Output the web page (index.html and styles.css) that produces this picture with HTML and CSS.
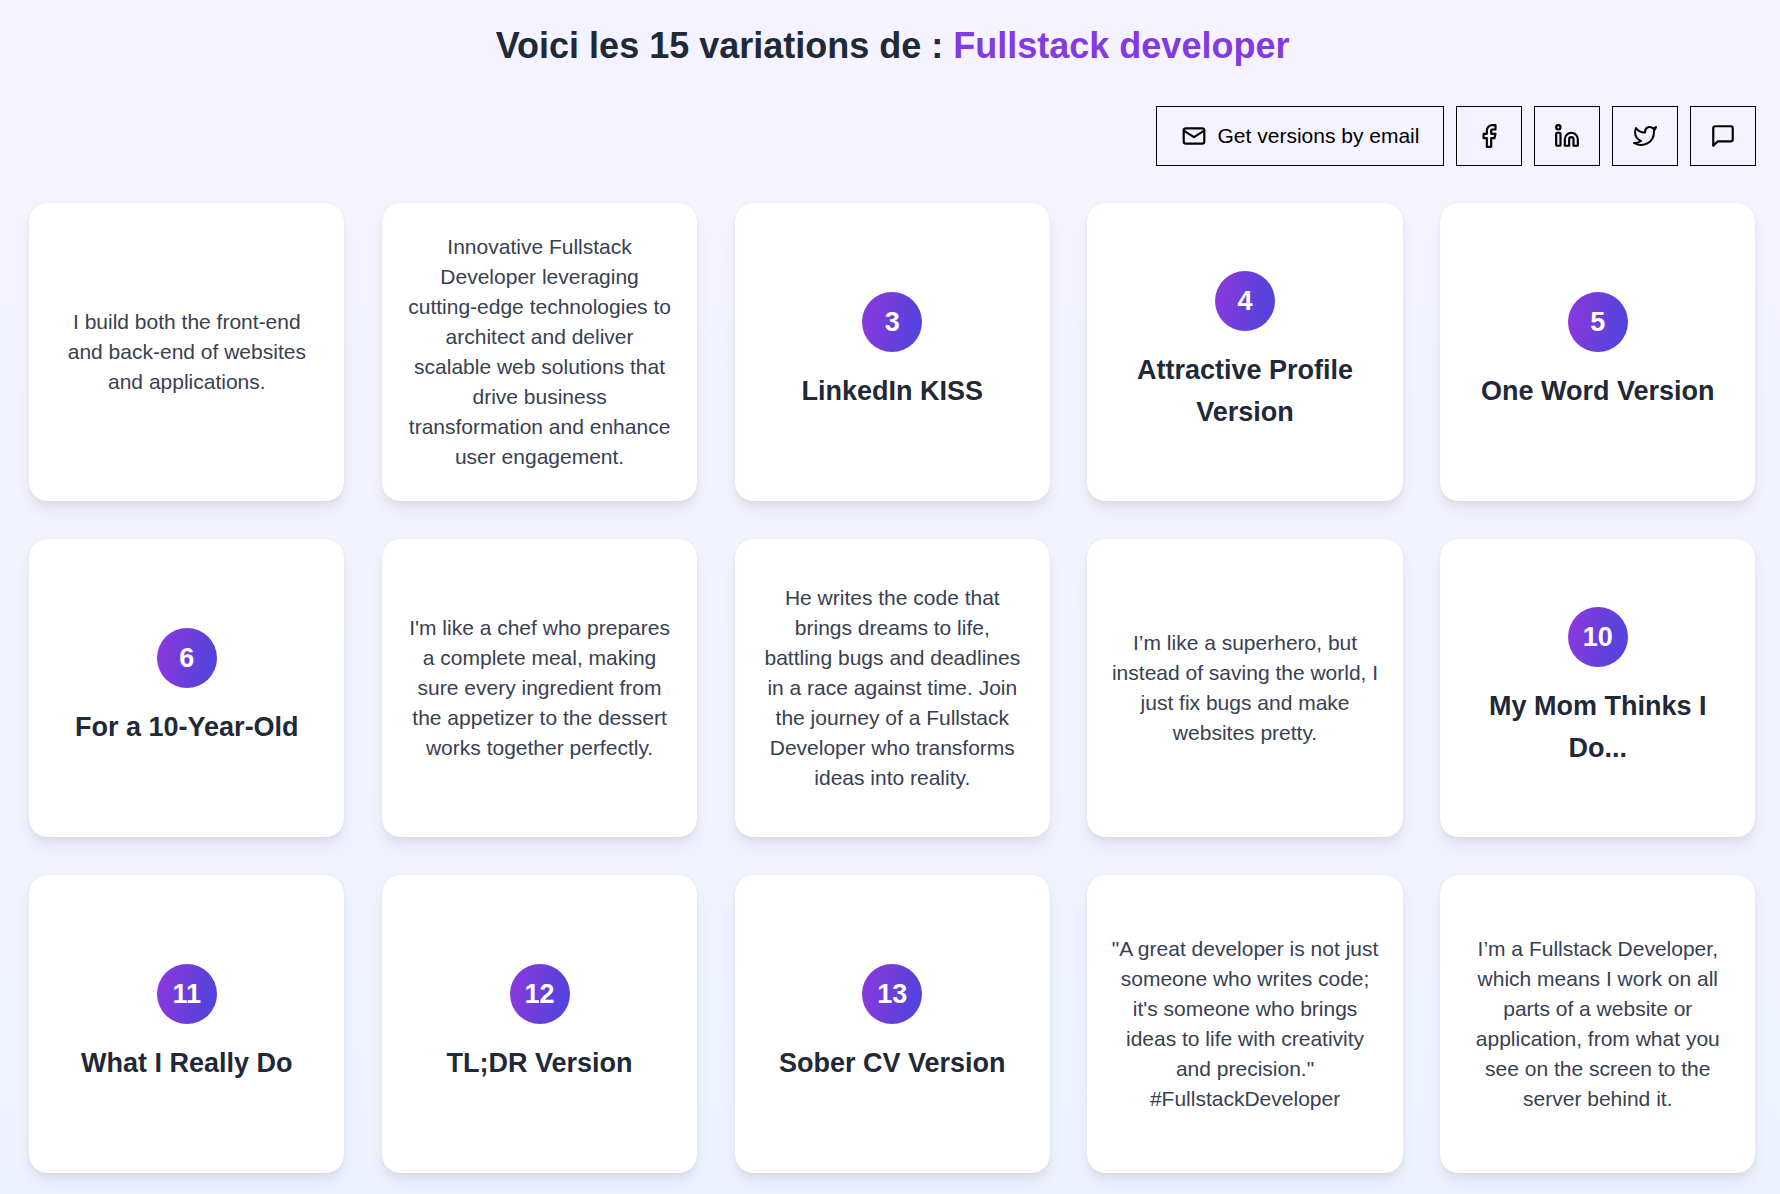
FILE: index.html
```html
<!DOCTYPE html>
<html lang="en">
<head>
<meta charset="utf-8">
<title>Variations</title>
<link rel="stylesheet" href="styles.css">
</head>
<body>
<main class="page">
  <h1 class="title">Voici les 15 variations de : <span class="accent">Fullstack developer</span></h1>
  <div class="actions">
    <button class="btn btn-wide"><svg class="icon" viewBox="0 0 24 24"><rect x="2.500" y="5" width="19" height="14" rx="2"/><path d="m2.500 7 9.500 6 9.500-6"/></svg>Get versions by email</button>
    <button class="btn btn-icon"><svg class="icon" viewBox="0 0 24 24"><path d="M18 2h-3a5 5 0 0 0-5 5v3H7v4h3v8h4v-8h3l1-4h-4V7a1 1 0 0 1 1-1h3z"/></svg></button>
    <button class="btn btn-icon"><svg class="icon" viewBox="0 0 24 24"><path d="M16 9a6 6 0 0 1 6 6v6h-4v-6a2 2 0 0 0-4 0v6h-4v-6a6 6 0 0 1 6-6z"/><rect x="2" y="9" width="4" height="12" rx="1"/><circle cx="4" cy="4" r="2"/></svg></button>
    <button class="btn btn-icon"><svg class="icon" viewBox="-1 -1 26 26"><path d="M23 3a10.900 10.900 0 0 1-3 1.530 4.480 4.480 0 0 0-7.860 3v1A10.660 10.660 0 0 1 3 4s-4 9 5 13a11.640 11.640 0 0 1-7 2c9 5 20 0 20-11.500a4.500 4.500 0 0 0-.08-.83A7.720 7.720 0 0 0 23 3z"/></svg></button>
    <button class="btn btn-icon"><svg class="icon" viewBox="0 0 24 24"><path d="M21 15a2 2 0 0 1-2 2H7l-4 4V5a2 2 0 0 1 2-2h14a2 2 0 0 1 2 2z"/></svg></button>
  </div>
  <section class="grid">
    <article class="card"><p>I build both the front-end and back-end of websites and applications.</p></article>
    <article class="card"><p>Innovative Fullstack Developer leveraging cutting-edge technologies to architect and deliver scalable web solutions that drive business transformation and enhance user engagement.</p></article>
    <article class="card"><span class="badge">3</span><h2>LinkedIn KISS</h2></article>
    <article class="card"><span class="badge">4</span><h2>Attractive Profile Version</h2></article>
    <article class="card"><span class="badge">5</span><h2>One Word Version</h2></article>
    <article class="card"><span class="badge">6</span><h2>For a 10-Year-Old</h2></article>
    <article class="card"><p>I'm like a chef who prepares a complete meal, making sure every ingredient from the appetizer to the dessert works together perfectly.</p></article>
    <article class="card"><p>He writes the code that brings dreams to life, battling bugs and deadlines in a race against time. Join the journey of a Fullstack Developer who transforms ideas into reality.</p></article>
    <article class="card"><p>I’m like a superhero, but instead of saving the world, I just fix bugs and make websites pretty.</p></article>
    <article class="card"><span class="badge">10</span><h2>My Mom Thinks I Do...</h2></article>
    <article class="card"><span class="badge">11</span><h2>What I Really Do</h2></article>
    <article class="card"><span class="badge">12</span><h2>TL;DR Version</h2></article>
    <article class="card"><span class="badge">13</span><h2>Sober CV Version</h2></article>
    <article class="card"><p>"A great developer is not just someone who writes code; it's someone who brings ideas to life with creativity and precision." #FullstackDeveloper</p></article>
    <article class="card"><p>I’m a Fullstack Developer, which means I work on all parts of a website or application, from what you see on the screen to the server behind it.</p></article>
  </section>
</main>
</body>
</html>
```
FILE: styles.css
```css
* { box-sizing: border-box; }
html, body { margin: 0; height: 100%; }
body {
  background: linear-gradient(180deg, #f5f3ff 0%, #eef2ff 100%);
  font-family: "Liberation Sans", Arial, sans-serif;
  overflow: hidden;
}
.page { padding: 23px 24px 0 29.2px; }
.title {
  margin: 0;
  text-align: center;
  font-size: 36px;
  line-height: 46px;
  font-weight: 700;
  color: #1f2937;
}
.accent { color: #833ae0; }
.actions {
  display: flex;
  justify-content: flex-end;
  gap: 12px;
  margin-top: 37px;
}
.btn {
  height: 60px;
  display: flex;
  align-items: center;
  justify-content: center;
  background: transparent;
  border: 1px solid #000;
  border-radius: 0;
  padding: 0;
  color: #000;
  font-family: inherit;
  font-size: 21px;
}
.btn-wide { width: 288px; gap: 11px; }
.btn-icon { width: 66px; }
.icon {
  width: 26px;
  height: 26px;
  fill: none;
  stroke: currentColor;
  stroke-width: 2;
  stroke-linecap: round;
  stroke-linejoin: round;
}
.grid {
  display: grid;
  grid-template-columns: repeat(5, 315.3px);
  grid-auto-rows: 298.5px;
  column-gap: 37.45px;
  row-gap: 37.5px;
  margin-top: 36.5px;
}
.card {
  display: flex;
  flex-direction: column;
  align-items: center;
  justify-content: center;
  padding: 22px 24px;
  text-align: center;
  background: #fff;
  border-radius: 18px;
  box-shadow: 0 10px 17px -3px rgba(0, 0, 0, .08), 0 4px 7px -2px rgba(0, 0, 0, .05), 0 0 1px rgba(0, 0, 0, .15);
}
.card p {
  margin: 0;
  font-size: 21px;
  line-height: 30px;
  color: #374151;
}
.card h2 {
  margin: 18px 0 0;
  font-size: 27px;
  line-height: 42px;
  font-weight: 700;
  color: #1f2937;
}
.badge {
  width: 60px;
  height: 60px;
  flex: none;
  display: flex;
  align-items: center;
  justify-content: center;
  padding-top: 1px;
  border-radius: 50%;
  background: linear-gradient(100deg, #8f38dc, #4a45dc);
  color: #fff;
  font-size: 27px;
  font-weight: 700;
}
```
